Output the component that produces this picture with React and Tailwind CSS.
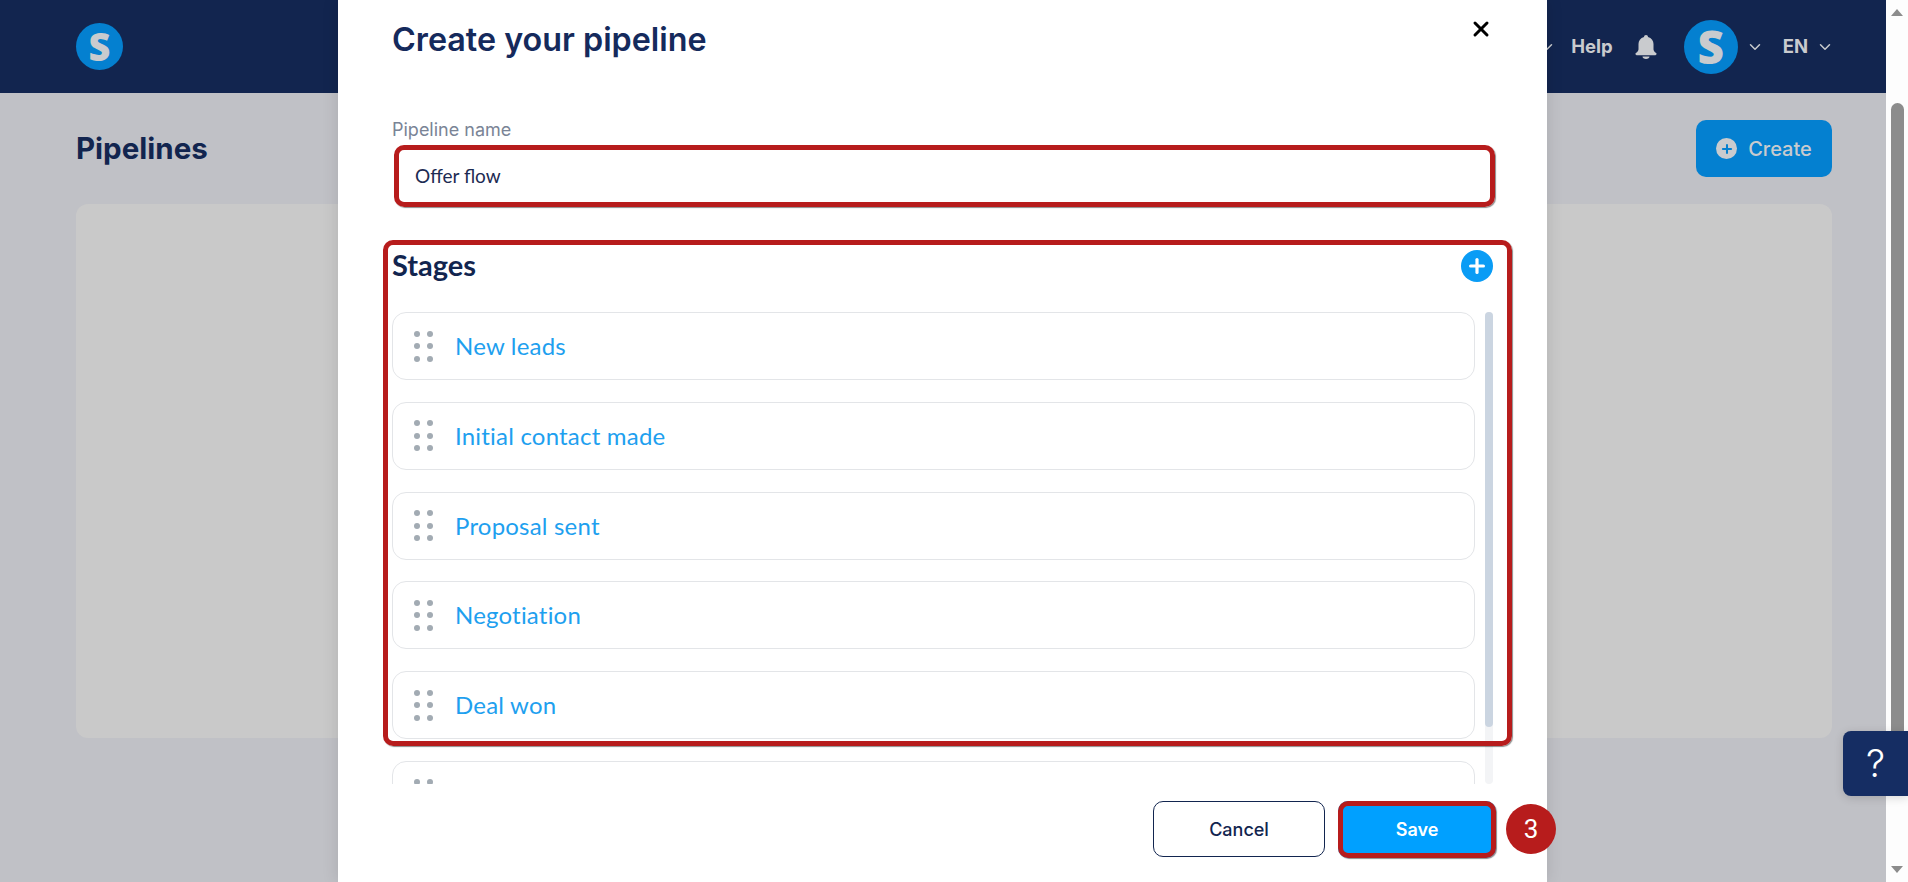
import { ChevronDown, X, Plus } from 'lucide-react';

const STAGES = ['New leads', 'Initial contact made', 'Proposal sent', 'Negotiation', 'Deal won', ''];

const DragDots = () => (
  <div className="grid w-[19px] shrink-0 grid-cols-2 gap-x-[7px] gap-y-[6.5px]">
    {[0, 1, 2, 3, 4, 5].map((i) => (
      <span key={i} className="block h-[6px] w-[6px] rounded-full bg-[#a2abb3]" />
    ))}
  </div>
);

const StageRow = ({ name }) => (
  <div className="flex h-[68px] shrink-0 items-center rounded-[14px] border border-[#e3e5e8] bg-white pl-[21px]">
    <DragDots />
    {/* the sixth row is cut off by the list, so it has no visible label */}
    {name && (
      <span className="ml-[22px] text-[24px] tracking-[0.2px] text-[#1ea0ef] font-['Lato',sans-serif]">{name}</span>
    )}
  </div>
);

const Logo = ({ size, text }) => (
  <div
    className={`flex items-center justify-center rounded-full bg-[#0480d0] font-extrabold text-[#c9cbce] font-['Open_Sans',sans-serif] ${size} ${text}`}
  >
    S
  </div>
);

const Annotation = ({ className }) => (
  <div
    className={`pointer-events-none absolute rounded-[10px] border-[5px] border-[#b71c1c] shadow-[1px_1px_1px_rgba(0,0,0,0.45)] ${className}`}
  />
);

const App = () => {
  return (
    <div className="relative flex h-[882px] w-full overflow-hidden bg-white font-['Inter',sans-serif]">
      {/* page behind the modal */}
      <div className="flex min-w-0 flex-1 flex-col bg-[#c0c1c6]">
        <header className="flex h-[93px] shrink-0 items-center justify-between bg-[#12254f] pl-[76px] pr-[52px]">
          <Logo size="h-[47px] w-[47px]" text="text-[38px]" />
          <div className="flex items-center text-[#c9cbce]">
            <ChevronDown size={18} />
            <span className="ml-[15px] text-[18.5px] font-bold">Help</span>
            <svg className="ml-[21px]" width="24" height="26" viewBox="0 0 24 26" fill="currentColor">
              <path d="M12 1c-1.200 0-2 .8-2 1.900C6.400 3.800 4.500 6.700 4.500 10v5.200c0 1.600-1 2.700-2.600 3.900-.9.7-.4 2.100.7 2.100h18.800c1.100 0 1.600-1.400.7-2.100-1.600-1.200-2.600-2.300-2.600-3.900V10c0-3.300-1.900-6.200-5.500-7.100C14 1.800 13.200 1 12 1z" />
              <path d="M8.500 22.500h7c0 1.300-1.500 2.500-3.500 2.500s-3.500-1.200-3.500-2.500z" />
            </svg>
            <div className="ml-[26px]">
              <Logo size="h-[54px] w-[54px]" text="text-[46px]" />
            </div>
            <ChevronDown className="ml-[8px]" size={18} />
            <span className="ml-[19px] text-[18.5px] font-bold">EN</span>
            <ChevronDown className="ml-[8px]" size={18} />
          </div>
        </header>

        <div className="flex flex-1 flex-col pl-[76px] pr-[54px] pt-[27px]">
          <div className="flex h-[57px] items-center justify-between">
            <h1 className="text-[29.5px] font-bold text-[#12254f]">Pipelines</h1>
            <button className="flex h-[57px] w-[136px] items-center justify-center gap-[11px] rounded-[10px] bg-[#0480d0] text-[20px] font-medium text-[#c9cbce]">
              <span className="flex h-[21px] w-[21px] items-center justify-center rounded-full bg-[#c9cbce] text-[#0480d0]">
                <Plus size={14} strokeWidth={3.5} />
              </span>
              Create
            </button>
          </div>
          <div className="mt-[27px] h-[534px] rounded-[12px] bg-[#c9c9c9]" />
        </div>
      </div>

      {/* browser scrollbar */}
      <div className="flex w-[22px] shrink-0 flex-col items-center bg-[#fdfdfd] pt-[9px]">
        <span className="h-0 w-0 border-x-[6px] border-b-[7px] border-x-transparent border-b-[#8c8c8c]" />
        <div className="mt-[87px] h-[640px] w-[13px] rounded-full bg-[#8c8c8c]" />
        <span className="mb-[9px] mt-auto h-0 w-0 border-x-[6px] border-t-[7px] border-x-transparent border-t-[#8c8c8c]" />
      </div>

      {/* help tab */}
      <button className="absolute right-0 top-[731px] flex h-[65px] w-[65px] items-center justify-center rounded-l-[8px] bg-[#152d63] text-[38px] font-light text-white shadow-[0_2px_10px_rgba(0,0,0,0.15)]">
        ?
      </button>

      {/* modal */}
      <div className="absolute left-[338px] top-0 flex h-[882px] w-[1209px] flex-col bg-white pl-[54px] pr-[53px] shadow-[0_0_16px_rgba(0,0,0,0.12)]">
        <div className="flex h-[80px] shrink-0 items-center justify-between">
          <h2 className="text-[32.3px] font-semibold text-[#152a5c]">Create your pipeline</h2>
          <X className="mb-[22px] mr-[1px] text-black" size={24} strokeWidth={3} />
        </div>

        <label className="mt-[39px] text-[18px] leading-[22px] text-[#7a8496]">Pipeline name</label>
        <div className="relative ml-[2px] mr-[-1px] mt-[4px]">
          <div className="flex h-[62px] items-center rounded-[10px] bg-white pl-[21px] text-[19px] text-[#1d2b53] font-['Lato',sans-serif]">
            Offer flow
          </div>
          <Annotation className="inset-0" />
        </div>

        <section className="relative mr-[1px] mt-[33px] flex flex-col">
          <Annotation className="left-[-9px] right-[-19px] top-0 h-[506px]" />
          <div className="flex h-[72px] shrink-0 items-start justify-between pt-[10px]">
            <h3 className="mt-[-2px] text-[29px] font-bold leading-[34px] text-[#12254f] font-['Lato',sans-serif]">Stages</h3>
            <span className="flex h-[32px] w-[32px] items-center justify-center rounded-full bg-[#0a9cf5] text-white">
              <Plus size={22} strokeWidth={3.5} />
            </span>
          </div>
          <div className="flex h-[472px] gap-[10px] overflow-hidden">
            <div className="flex min-w-0 flex-1 flex-col gap-[21.8px]">
              {STAGES.map((stage, i) => (
                <StageRow key={i} name={stage} />
              ))}
            </div>
            <div className="h-full w-[8px] shrink-0 rounded-full bg-[#f3f4f6]">
              <div className="h-[415px] w-[8px] rounded-full bg-[#cbd5e1]" />
            </div>
          </div>
        </section>

        <div className="mr-[-2px] mt-[17px] flex items-start justify-end gap-[13px]">
          <button className="h-[56px] w-[172px] rounded-[10px] border border-[#12254f] bg-white text-[18px] font-medium text-[#12254f]">
            Cancel
          </button>
          <div className="relative">
            <button className="block h-[57px] w-[158px] rounded-[10px] bg-[#00a0ff] text-[18px] font-semibold text-white">
              Save
            </button>
            <Annotation className="inset-0" />
            <span className="absolute left-[168px] top-[3px] flex h-[50px] w-[50px] items-center justify-center rounded-full bg-[#b71c1c] text-[26px] text-white font-['Roboto',sans-serif]">
              3
            </span>
          </div>
        </div>
      </div>
    </div>
  );
};

export default App;
